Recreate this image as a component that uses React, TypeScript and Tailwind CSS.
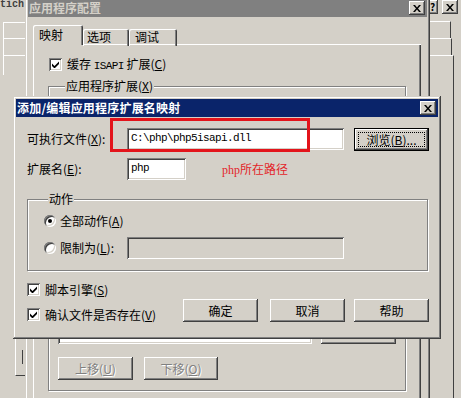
import React from 'react';

const raised = 'shadow-[inset_-1px_-1px_0_#404040,inset_1px_1px_0_#ffffff,inset_-2px_-2px_0_#808080]';
const sunken = 'shadow-[inset_1px_1px_0_#808080,inset_-1px_-1px_0_#ffffff,inset_2px_2px_0_#404040,inset_-2px_-2px_0_#d4d0c8]';
const frame = 'shadow-[inset_-1px_-1px_0_#404040,inset_1px_1px_0_#d4d0c8,inset_-2px_-2px_0_#808080,inset_2px_2px_0_#ffffff]';
const etched = 'border border-[#808080] shadow-[inset_1px_1px_0_#ffffff,1px_1px_0_#ffffff]';
const mono = "font-['Liberation_Mono',monospace] text-[11px] tracking-[-0.6px]";

const Key = ({ k }: { k: string }) => (
  <>
    (<span className="underline underline-offset-[1px]">{k}</span>)
  </>
);

const CloseBtn = () => (
  <div className={`w-[16px] h-[14px] shrink-0 bg-[#d4d0c8] flex items-center justify-center ${raised}`}>
    <svg width="8" height="7" viewBox="0 0 8 7">
      <path d="M0 0h2l2 2.4L6 0h2L5 3.5 8 7H6L4 4.6 2 7H0l3-3.5z" fill="#000" />
    </svg>
  </div>
);

const Check = () => (
  <div className={`w-[13px] h-[13px] shrink-0 bg-white flex items-center justify-center ${sunken}`}>
    <svg width="7" height="7" viewBox="0 0 7 7">
      <path d="M0 2.5L2.5 5L7 0.5V3L2.5 7.5L0 5z" fill="#000" />
    </svg>
  </div>
);

const Radio = ({ on }: { on?: boolean }) => (
  <div className="w-[12px] h-[12px] shrink-0 rounded-full bg-white flex items-center justify-center shadow-[inset_1px_1px_0_#808080,inset_-1px_-1px_0_#ffffff,inset_2px_2px_0_#404040,inset_-2px_-2px_0_#d4d0c8]">
    {on && <div className="w-[4px] h-[4px] rounded-full bg-black" />}
  </div>
);

const Btn = ({ children, w = 'w-[75px]', disabled }: { children: React.ReactNode; w?: string; disabled?: boolean }) => (
  <div
    className={`${w} h-[23px] shrink-0 bg-[#d4d0c8] flex items-center justify-center ${raised} ${
      disabled ? 'text-[#808080] [text-shadow:1px_1px_0_#ffffff]' : ''
    }`}
  >
    {children}
  </div>
);

export default function App() {
  return (
    <div className="relative w-[461px] h-[398px] overflow-hidden bg-[#d4d0c8] font-['Noto_Sans_CJK_SC',sans-serif] text-[12px] leading-[14px] text-black">
      {/* left stack of windows behind */}
      <div className="absolute left-0 top-0 w-[25px] bg-[#d4d0c8] font-['Liberation_Mono',monospace] font-bold text-[10px] leading-[9px] text-[#404040]">
        tich
      </div>
      <div className="absolute left-[3px] top-[22px] w-[40px] h-[53px] border-t border-l border-white" />
      <div className="absolute left-[3px] top-[38px] w-[40px] h-[20px] border-t border-white" />
      <div className="absolute left-[3px] top-[55px] w-[40px] h-[20px] border-t border-white" />
      <div className="absolute left-[15px] top-[300px] w-[30px] h-[76px] border-l border-white border-b border-b-[#404040]">
        <div className="ml-[6px] mt-[50px] w-px h-[14px] bg-[#404040]" />
      </div>

      {/* right stack of windows behind */}
      <div className="absolute left-[422px] top-0 w-[39px] h-[16px] flex items-start gap-[4px]">
        <div className={`w-[16px] h-[14px] bg-[#d4d0c8] flex items-center justify-end pr-[1px] font-bold text-[10px] leading-[12px] ${raised}`}>
          <span className="w-[7px]">?</span>
        </div>
        <CloseBtn />
      </div>
      <div className="absolute left-[400px] top-[21px] w-[51px] h-[400px] bg-[#d4d0c8] border-t border-white border-r border-r-[#404040]" />
      <div className="absolute left-[400px] top-[38px] w-[52px] h-[400px] bg-[#d4d0c8] border-t border-white border-r border-r-[#404040]" />
      <div className="absolute left-[400px] top-[55px] w-[54px] h-[400px] bg-[#d4d0c8] border-t border-white border-r border-r-[#404040]" />

      {/* 应用程序配置 */}
      <div className={`absolute left-[25px] top-[-4px] w-[405px] h-[440px] bg-[#d4d0c8] p-[3px] ${frame}`}>
        <div className="h-[18px] bg-[#808080] flex items-center justify-between pl-[1px] pr-[2px]">
          <span className="font-bold text-[#d4d0c8]">应用程序配置</span>
          <CloseBtn />
        </div>
        <div className="pl-[5px] pr-[6px] pt-[8px]">
          <div className="flex items-end h-[20px] relative z-10">
            <div className="w-[50px] h-[20px] pl-[6px] pt-[3px] bg-[#d4d0c8] rounded-t-[2px] shadow-[inset_1px_1px_0_#ffffff,inset_-1px_0_0_#404040,inset_-2px_0_0_#808080]">
              映射
            </div>
            <div className="w-[46px] h-[17px] pl-[4px] pt-[1px] -mb-px rounded-t-[2px] shadow-[inset_1px_1px_0_#ffffff,inset_-1px_0_0_#404040,inset_-2px_0_0_#808080]">
              选项
            </div>
            <div className="w-[48px] h-[17px] pl-[6px] pt-[1px] -mb-px rounded-t-[2px] shadow-[inset_1px_1px_0_#ffffff,inset_-1px_0_0_#404040,inset_-2px_0_0_#808080]">
              调试
            </div>
          </div>
          <div className="-mt-px h-[400px] pt-[14px] pl-[16px] shadow-[inset_1px_1px_0_#ffffff,inset_-1px_-1px_0_#404040,inset_-2px_-2px_0_#808080]">
            <div className="flex items-center gap-[5px] h-[13px]">
              <Check />
              <span>
                缓存 <span className={mono}>ISAPI</span> 扩展<Key k="C" />
              </span>
            </div>
            <fieldset className={`-ml-px mt-[8px] w-[358px] ${etched} pl-[9px] pb-[10px]`}>
              <legend className="ml-[7px] px-[1px] bg-[#d4d0c8]">
                应用程序扩展<Key k="X" />
              </legend>
              <div className="mt-[8px] flex gap-[9px]">
                <div className={`w-[254px] h-[243px] bg-white ${sunken}`} />
                <div className="h-[243px] flex flex-col justify-end gap-[6px]">
                  <Btn>插入</Btn>
                  <Btn>编辑</Btn>
                  <Btn>删除</Btn>
                </div>
              </div>
              <div className="mt-[13px] flex gap-[11px]">
                <Btn disabled>
                  上移<Key k="U" />
                </Btn>
                <Btn disabled w="w-[74px]">
                  下移<Key k="O" />
                </Btn>
              </div>
            </fieldset>
          </div>
        </div>
      </div>

      {/* 添加/编辑应用程序扩展名映射 */}
      <div className={`absolute left-[13px] top-[96px] w-[428px] h-[243px] bg-[#d4d0c8] p-[3px] ${frame}`}>
        <div className="h-[18px] bg-[#0a246a] flex items-center justify-between pl-[1px] pr-[2px]">
          <span className="font-bold text-white tracking-[0.2px]">添加/编辑应用程序扩展名映射</span>
          <CloseBtn />
        </div>
        <div className="pl-[11px] pt-[11px]">
          <div className="flex items-start h-[23px]">
            <span className="w-[100px] pt-[4px]">
              可执行文件<Key k="X" />:
            </span>
            <div className={`w-[217px] h-[22px] bg-white pl-[4px] pt-[4px] ${sunken} ${mono} leading-[13px]`}>
              C:\php\php5isapi.dll
            </div>
            <div className="ml-[10px] w-[75px] h-[23px] p-[4px] bg-[#d4d0c8] shadow-[inset_0_0_0_1px_#000000,inset_-2px_-2px_0_#404040,inset_2px_2px_0_#ffffff,inset_-3px_-3px_0_#808080]">
              <div className="w-full h-full border border-dotted border-black flex items-center justify-center">
                浏览<Key k="B" />...
              </div>
            </div>
          </div>
          <div className="mt-[7px] flex items-center h-[22px]">
            <span className="w-[100px]">
              扩展名<Key k="E" />:
            </span>
            <div className={`w-[59px] h-[22px] bg-white pl-[4px] pt-[4px] ${sunken} ${mono} leading-[13px]`}>php</div>
            <span className="ml-[36px] text-[#e3262a]">
              <span className="font-['Liberation_Serif',serif]">php</span>所在路径
            </span>
          </div>
          <fieldset className={`mt-[12px] w-[401px] ${etched} pl-[16px] pb-[11px]`}>
            <legend className="ml-[4px] px-[1px] bg-[#d4d0c8]">动作</legend>
            <div className="mt-[8px] h-[14px] flex items-center gap-[4px]">
              <Radio on />
              <span>
                全部动作<Key k="A" />
              </span>
            </div>
            <div className="mt-[9px] h-[22px] flex items-center">
              <div className="w-[83px] flex items-center gap-[4px]">
                <Radio />
                <span>
                  限制为<Key k="L" />:
                </span>
              </div>
              <div className={`w-[217px] h-[22px] bg-[#d4d0c8] ${sunken}`} />
            </div>
          </fieldset>
          <div className="mt-[12px] flex items-start">
            <div className="w-[156px] flex flex-col gap-[12px]">
              <div className="h-[13px] flex items-center gap-[5px]">
                <Check />
                <span>
                  脚本引擎<Key k="S" />
                </span>
              </div>
              <div className="h-[13px] flex items-center gap-[5px]">
                <Check />
                <span>
                  确认文件是否存在<Key k="V" />
                </span>
              </div>
            </div>
            <div className="mt-[16px] flex">
              <Btn>确定</Btn>
              <div className="ml-[12px]">
                <Btn>取消</Btn>
              </div>
              <div className="ml-[9px]">
                <Btn>帮助</Btn>
              </div>
            </div>
          </div>
        </div>
        {/* annotation */}
        <div className="absolute left-[97px] top-[22px] w-[200px] h-[34px] border-[3px] border-[#e3141b]" />
      </div>
    </div>
  );
}
